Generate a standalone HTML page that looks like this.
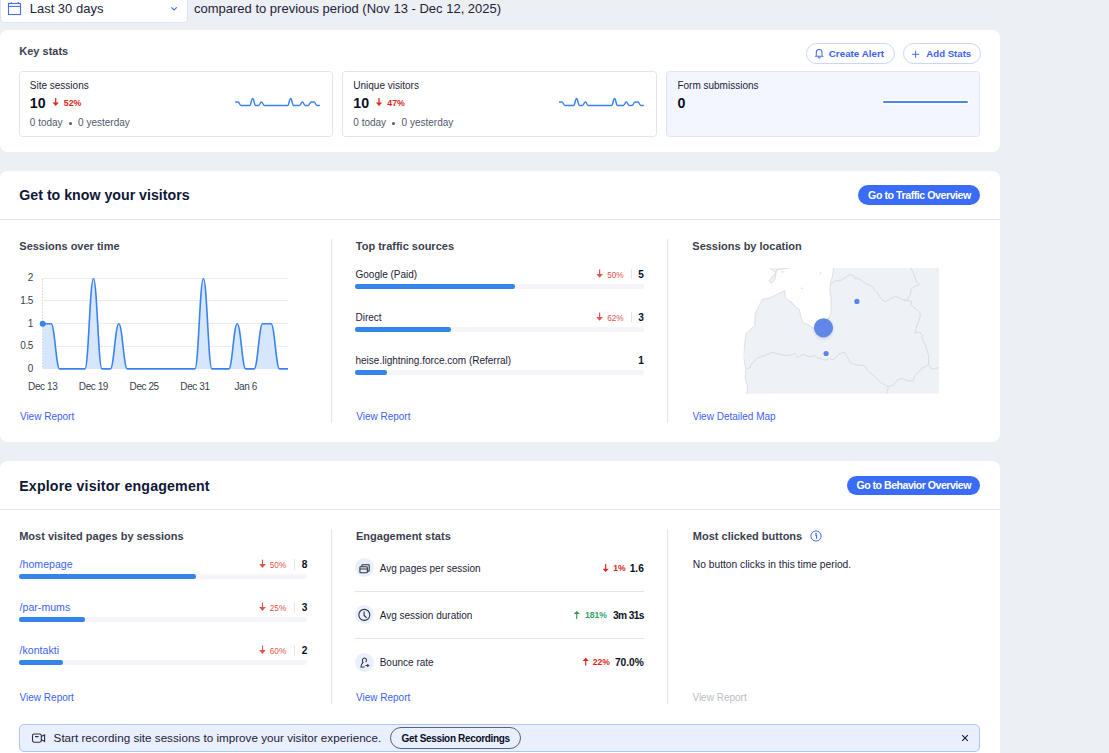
<!DOCTYPE html><html><head><meta charset="utf-8"><style>
html,body{margin:0;padding:0;}
body{width:1109px;height:753px;overflow:hidden;position:relative;background:#eceff4;font-family:"Liberation Sans",sans-serif;}
.t{position:absolute;white-space:nowrap;}
.r{position:absolute;box-sizing:border-box;}
svg{position:absolute;overflow:visible;}
</style></head><body>

<div class="r" style="left:0px;top:-10px;width:188px;height:33px;background:#fff;border:1px solid #d9e4fc;border-radius:4px;"></div>
<svg style="left:0;top:0" width="40" height="22"><g fill="none" stroke="#4a6cf2" stroke-width="1.1"><rect x="8.5" y="3.5" width="12" height="11"/><line x1="8.5" y1="6.4" x2="20.5" y2="6.4"/><line x1="11.2" y1="2" x2="11.2" y2="4"/><line x1="18.3" y1="2" x2="18.3" y2="4"/></g></svg>
<div class="t" style="left:29.70px;top:2.00px;font-size:13px;line-height:13px;color:#1d2338;">Last 30 days</div>
<svg style="left:0;top:0" width="1" height="1"><polyline points="171.3,7.4 174,10 176.8,7.4" fill="none" stroke="#4a6cf2" stroke-width="1.2"/></svg>
<div class="t" style="left:194.00px;top:2.00px;font-size:13px;line-height:13px;color:#1d2338;">compared to previous period (Nov 13 - Dec 12, 2025)</div>
<div class="r" style="left:0px;top:30px;width:1000px;height:122px;background:#fff;border-radius:8px;"></div>
<div class="t" style="left:19.30px;top:46.00px;font-size:11px;line-height:11px;color:#3b3f4f;font-weight:700;">Key stats</div>
<div class="r" style="left:806px;top:43px;width:89px;height:21px;background:#fff;border:1px solid #c9d6f7;border-radius:11px;"></div>
<svg style="left:0;top:0" width="1" height="1"><path d="M816.3,55.6 V52.2 C816.3,50.4 817.6,49.4 819.2,49.4 C820.8,49.4 822,50.4 822,52.2 V55.6 M815.3,56.2 H823 M818.2,57.4 C818.6,58.3 819.8,58.3 820.2,57.4" fill="none" stroke="#4a6cf2" stroke-width="1.05" stroke-linecap="round"/></svg>
<div class="t" style="left:828.80px;top:49.00px;font-size:9.8px;line-height:9.8px;color:#3d5ff5;font-weight:700;">Create Alert</div>
<div class="r" style="left:903px;top:43px;width:78px;height:21px;background:#fff;border:1px solid #c9d6f7;border-radius:11px;"></div>
<svg style="left:911px;top:49px" width="10" height="10"><path d="M4.6,1.8 V8.8 M1.1,5.3 H8.1" fill="none" stroke="#4a6cf2" stroke-width="1"/></svg>
<div class="t" style="left:926.30px;top:49.00px;font-size:9.65px;line-height:9.65px;color:#3d5ff5;font-weight:700;">Add Stats</div>
<div class="r" style="left:19px;top:71px;width:314px;height:65.5px;background:#fff;border:1px solid #e0e4eb;border-radius:3.5px;"></div>
<div class="t" style="left:29.80px;top:81.00px;font-size:10px;line-height:10px;color:#1d2338;">Site sessions</div>
<div class="t" style="left:29.80px;top:96.00px;font-size:14.2px;line-height:14.2px;color:#0a0f24;font-weight:700;">10</div>
<svg style="left:0;top:0" width="1" height="1"><path d="M52.55,102.60 L55.70,106.10 L58.85,102.60 Z" fill="#e0261a"/><path d="M55.70,98.00 V102.90" stroke="#e0261a" stroke-width="1.25"/></svg>
<div class="t" style="left:63.80px;top:99.00px;font-size:8.8px;line-height:8.8px;color:#e0261a;font-weight:700;">52%</div>
<div class="t" style="left:29.80px;top:118.00px;font-size:10px;line-height:10px;color:#525a6e;">0 today</div>
<div class="r" style="left:68.8px;top:121.5px;width:3px;height:3px;border-radius:50%;background:#555b68"></div>
<div class="t" style="left:78.10px;top:118.00px;font-size:10px;line-height:10px;color:#525a6e;">0 yesterday</div>
<svg style="left:0;top:0" width="1" height="1"><path d="M235.10,102.00 C236.43,102.00 236.69,102.00 238.02,102.00 C239.35,102.00 239.62,105.40 240.95,105.40 C242.28,105.40 242.54,105.40 243.87,105.40 C245.20,105.40 245.47,105.40 246.80,105.40 C248.13,105.40 248.39,105.40 249.72,105.40 C251.05,105.40 251.32,98.60 252.64,98.60 C253.97,98.60 254.24,105.40 255.57,105.40 C256.90,105.40 257.16,105.40 258.49,105.40 C259.82,105.40 260.09,102.00 261.42,102.00 C262.75,102.00 263.01,105.40 264.34,105.40 C265.67,105.40 265.94,105.40 267.27,105.40 C268.59,105.40 268.86,105.40 270.19,105.40 C271.52,105.40 271.78,105.40 273.11,105.40 C274.44,105.40 274.71,105.40 276.04,105.40 C277.37,105.40 277.63,105.40 278.96,105.40 C280.29,105.40 280.56,105.40 281.89,105.40 C283.22,105.40 283.48,105.40 284.81,105.40 C286.14,105.40 286.41,105.40 287.73,105.40 C289.06,105.40 289.33,98.60 290.66,98.60 C291.99,98.60 292.25,105.40 293.58,105.40 C294.91,105.40 295.18,105.40 296.51,105.40 C297.84,105.40 298.10,105.40 299.43,105.40 C300.76,105.40 301.03,102.00 302.36,102.00 C303.68,102.00 303.95,105.40 305.28,105.40 C306.61,105.40 306.87,105.40 308.20,105.40 C309.53,105.40 309.80,102.00 311.13,102.00 C312.46,102.00 312.72,102.00 314.05,102.00 C315.38,102.00 315.65,105.40 316.98,105.40 C318.31,105.40 318.57,105.40 319.90,105.40" fill="none" stroke="#3b82f0" stroke-width="1.5"/></svg>
<div class="r" style="left:342px;top:71px;width:315px;height:65.5px;background:#fff;border:1px solid #e0e4eb;border-radius:3.5px;"></div>
<div class="t" style="left:353.30px;top:81.00px;font-size:10px;line-height:10px;color:#1d2338;">Unique visitors</div>
<div class="t" style="left:353.30px;top:96.00px;font-size:14.2px;line-height:14.2px;color:#0a0f24;font-weight:700;">10</div>
<svg style="left:0;top:0" width="1" height="1"><path d="M375.85,102.60 L379.00,106.10 L382.15,102.60 Z" fill="#e0261a"/><path d="M379.00,98.00 V102.90" stroke="#e0261a" stroke-width="1.25"/></svg>
<div class="t" style="left:387.30px;top:99.00px;font-size:8.8px;line-height:8.8px;color:#e0261a;font-weight:700;">47%</div>
<div class="t" style="left:353.30px;top:118.00px;font-size:10px;line-height:10px;color:#525a6e;">0 today</div>
<div class="r" style="left:392.3px;top:121.5px;width:3px;height:3px;border-radius:50%;background:#555b68"></div>
<div class="t" style="left:401.60px;top:118.00px;font-size:10px;line-height:10px;color:#525a6e;">0 yesterday</div>
<svg style="left:0;top:0" width="1" height="1"><path d="M559.00,102.00 C560.33,102.00 560.59,102.00 561.92,102.00 C563.25,102.00 563.52,105.40 564.85,105.40 C566.18,105.40 566.44,105.40 567.77,105.40 C569.10,105.40 569.37,105.40 570.70,105.40 C572.03,105.40 572.29,105.40 573.62,105.40 C574.95,105.40 575.22,98.60 576.54,98.60 C577.87,98.60 578.14,105.40 579.47,105.40 C580.80,105.40 581.06,105.40 582.39,105.40 C583.72,105.40 583.99,102.00 585.32,102.00 C586.65,102.00 586.91,105.40 588.24,105.40 C589.57,105.40 589.84,105.40 591.17,105.40 C592.49,105.40 592.76,105.40 594.09,105.40 C595.42,105.40 595.68,105.40 597.01,105.40 C598.34,105.40 598.61,105.40 599.94,105.40 C601.27,105.40 601.53,105.40 602.86,105.40 C604.19,105.40 604.46,105.40 605.79,105.40 C607.12,105.40 607.38,105.40 608.71,105.40 C610.04,105.40 610.31,105.40 611.63,105.40 C612.96,105.40 613.23,98.60 614.56,98.60 C615.89,98.60 616.15,105.40 617.48,105.40 C618.81,105.40 619.08,105.40 620.41,105.40 C621.74,105.40 622.00,105.40 623.33,105.40 C624.66,105.40 624.93,102.00 626.26,102.00 C627.58,102.00 627.85,105.40 629.18,105.40 C630.51,105.40 630.77,105.40 632.10,105.40 C633.43,105.40 633.70,102.00 635.03,102.00 C636.36,102.00 636.62,102.00 637.95,102.00 C639.28,102.00 639.55,105.40 640.88,105.40 C642.21,105.40 642.47,105.40 643.80,105.40" fill="none" stroke="#3b82f0" stroke-width="1.5"/></svg>
<div class="r" style="left:666px;top:71px;width:314px;height:65.5px;background:#f3f6fe;border:1px solid #dfe5f1;border-radius:3.5px;"></div>
<div class="t" style="left:677.40px;top:81.00px;font-size:10px;line-height:10px;color:#1d2338;">Form submissions</div>
<div class="t" style="left:677.40px;top:96.00px;font-size:14.2px;line-height:14.2px;color:#0a0f24;font-weight:700;">0</div>
<div class="r" style="left:882.8px;top:101.1px;width:85.3px;height:1.8px;background:#4a88f0;box-shadow:0 0 0 1.6px #fff;border-radius:1px;"></div>
<div class="r" style="left:0px;top:171px;width:1000px;height:270.5px;background:#fff;border-radius:8px;"></div>
<div class="t" style="left:19.30px;top:188.00px;font-size:14.2px;line-height:14.2px;color:#0f1736;font-weight:700;">Get to know your visitors</div>
<div class="r" style="left:858px;top:185px;width:122px;height:20px;background:#3a6cf7;border-radius:10px;"></div>
<div class="t" style="left:868.10px;top:190.00px;font-size:10.6px;line-height:10.6px;color:#fff;font-weight:700;letter-spacing:-0.44px;">Go to Traffic Overview</div>
<div class="r" style="left:0px;top:219px;width:1000px;height:1px;background:#e1e4ea;"></div>
<div class="r" style="left:331px;top:239px;width:1px;height:184px;background:#e3e6ec;"></div>
<div class="r" style="left:667px;top:239px;width:1px;height:184px;background:#e3e6ec;"></div>
<div class="t" style="left:19.30px;top:241.00px;font-size:11px;line-height:11px;color:#3b3f4f;font-weight:700;">Sessions over time</div>
<svg style="left:0;top:0" width="1" height="1"><line x1="42.7" y1="278.50" x2="288.0" y2="278.50" stroke="#ebecef" stroke-width="1"/><line x1="42.7" y1="300.50" x2="288.0" y2="300.50" stroke="#ebecef" stroke-width="1"/><line x1="42.7" y1="323.50" x2="288.0" y2="323.50" stroke="#ebecef" stroke-width="1"/><line x1="42.7" y1="346.50" x2="288.0" y2="346.50" stroke="#ebecef" stroke-width="1"/><line x1="42.5" y1="278.50" x2="42.5" y2="368.90" stroke="#d3d5da" stroke-width="1" stroke-dasharray="1.5,1.5"/><path d="M42.70,323.70 C46.22,323.70 47.63,323.70 51.16,323.70 C54.68,323.70 56.09,368.90 59.62,368.90 C63.14,368.90 64.55,368.90 68.08,368.90 C71.60,368.90 73.01,368.90 76.53,368.90 C80.06,368.90 81.47,368.90 84.99,368.90 C88.52,368.90 89.93,278.50 93.45,278.50 C96.98,278.50 98.39,368.90 101.91,368.90 C105.43,368.90 106.84,368.90 110.37,368.90 C113.89,368.90 115.30,323.70 118.83,323.70 C122.35,323.70 123.76,368.90 127.29,368.90 C130.81,368.90 132.22,368.90 135.74,368.90 C139.27,368.90 140.68,368.90 144.20,368.90 C147.73,368.90 149.14,368.90 152.66,368.90 C156.19,368.90 157.60,368.90 161.12,368.90 C164.65,368.90 166.05,368.90 169.58,368.90 C173.10,368.90 174.51,368.90 178.04,368.90 C181.56,368.90 182.97,368.90 186.50,368.90 C190.02,368.90 191.43,368.90 194.96,368.90 C198.48,368.90 199.89,278.50 203.41,278.50 C206.94,278.50 208.35,368.90 211.87,368.90 C215.40,368.90 216.81,368.90 220.33,368.90 C223.86,368.90 225.27,368.90 228.79,368.90 C232.31,368.90 233.72,323.70 237.25,323.70 C240.77,323.70 242.18,368.90 245.71,368.90 C249.23,368.90 250.64,368.90 254.17,368.90 C257.69,368.90 259.10,323.70 262.62,323.70 C266.15,323.70 267.56,323.70 271.08,323.70 C274.61,323.70 276.02,368.90 279.54,368.90 C283.07,368.90 284.48,368.90 288.00,368.90 L288.00,368.90 L42.70,368.90 Z" fill="#d6e6fc" stroke="none"/><path d="M42.70,323.70 C46.22,323.70 47.63,323.70 51.16,323.70 C54.68,323.70 56.09,368.90 59.62,368.90 C63.14,368.90 64.55,368.90 68.08,368.90 C71.60,368.90 73.01,368.90 76.53,368.90 C80.06,368.90 81.47,368.90 84.99,368.90 C88.52,368.90 89.93,278.50 93.45,278.50 C96.98,278.50 98.39,368.90 101.91,368.90 C105.43,368.90 106.84,368.90 110.37,368.90 C113.89,368.90 115.30,323.70 118.83,323.70 C122.35,323.70 123.76,368.90 127.29,368.90 C130.81,368.90 132.22,368.90 135.74,368.90 C139.27,368.90 140.68,368.90 144.20,368.90 C147.73,368.90 149.14,368.90 152.66,368.90 C156.19,368.90 157.60,368.90 161.12,368.90 C164.65,368.90 166.05,368.90 169.58,368.90 C173.10,368.90 174.51,368.90 178.04,368.90 C181.56,368.90 182.97,368.90 186.50,368.90 C190.02,368.90 191.43,368.90 194.96,368.90 C198.48,368.90 199.89,278.50 203.41,278.50 C206.94,278.50 208.35,368.90 211.87,368.90 C215.40,368.90 216.81,368.90 220.33,368.90 C223.86,368.90 225.27,368.90 228.79,368.90 C232.31,368.90 233.72,323.70 237.25,323.70 C240.77,323.70 242.18,368.90 245.71,368.90 C249.23,368.90 250.64,368.90 254.17,368.90 C257.69,368.90 259.10,323.70 262.62,323.70 C266.15,323.70 267.56,323.70 271.08,323.70 C274.61,323.70 276.02,368.90 279.54,368.90 C283.07,368.90 284.48,368.90 288.00,368.90" fill="none" stroke="#3b82f0" stroke-width="1.6"/><circle cx="42.7" cy="323.70" r="3" fill="#3b82f0"/></svg>
<div class="t" style="right:1076.10px;top:273.00px;font-size:10px;line-height:10px;color:#3a3f4c;letter-spacing:-0.45px;">2</div>
<div class="t" style="right:1076.10px;top:296.00px;font-size:10px;line-height:10px;color:#3a3f4c;letter-spacing:-0.45px;">1.5</div>
<div class="t" style="right:1076.10px;top:319.00px;font-size:10px;line-height:10px;color:#3a3f4c;letter-spacing:-0.45px;">1</div>
<div class="t" style="right:1076.10px;top:341.00px;font-size:10px;line-height:10px;color:#3a3f4c;letter-spacing:-0.45px;">0.5</div>
<div class="t" style="right:1076.10px;top:364.00px;font-size:10px;line-height:10px;color:#3a3f4c;letter-spacing:-0.45px;">0</div>
<div class="t" style="left:-17.30px;width:120px;text-align:center;top:382.00px;font-size:10px;line-height:10px;color:#3a3f4c;letter-spacing:-0.42px;">Dec 13</div>
<div class="t" style="left:33.45px;width:120px;text-align:center;top:382.00px;font-size:10px;line-height:10px;color:#3a3f4c;letter-spacing:-0.42px;">Dec 19</div>
<div class="t" style="left:84.20px;width:120px;text-align:center;top:382.00px;font-size:10px;line-height:10px;color:#3a3f4c;letter-spacing:-0.42px;">Dec 25</div>
<div class="t" style="left:134.96px;width:120px;text-align:center;top:382.00px;font-size:10px;line-height:10px;color:#3a3f4c;letter-spacing:-0.42px;">Dec 31</div>
<div class="t" style="left:185.71px;width:120px;text-align:center;top:382.00px;font-size:10px;line-height:10px;color:#3a3f4c;letter-spacing:-0.42px;">Jan 6</div>
<div class="t" style="left:19.90px;top:412.00px;font-size:10px;line-height:10px;color:#3d5ff5;">View Report</div>
<div class="t" style="left:355.80px;top:241.00px;font-size:11px;line-height:11px;color:#3b3f4f;font-weight:700;">Top traffic sources</div>
<div class="t" style="left:355.50px;top:270.00px;font-size:10px;line-height:10px;color:#1d2338;">Google (Paid)</div>
<div class="r" style="left:355px;top:284.2px;width:288.8px;height:4.5px;background:#f4f5f8;border-radius:2.25px;"></div>
<div class="r" style="left:355px;top:284.2px;width:160.20000000000005px;height:4.5px;background:#3584ea;border-radius:2.25px;"></div>
<div class="t" style="right:465.20px;top:270.00px;font-size:10.1px;line-height:10.1px;color:#0a0f24;font-weight:700;">5</div>
<div class="r" style="left:631px;top:269.2px;width:1px;height:10.3px;background:#e2e5ea;"></div>
<div class="t" style="right:485.40px;top:272.00px;font-size:8.2px;line-height:8.2px;color:#e5524a;">50%</div>
<svg style="left:0;top:0" width="1" height="1"><path d="M596.35,274.00 L599.60,277.80 L602.85,274.00 Z" fill="#e5524a"/><path d="M599.60,269.50 V274.30" stroke="#e5524a" stroke-width="1.15"/></svg>
<div class="t" style="left:355.50px;top:313.00px;font-size:10px;line-height:10px;color:#1d2338;">Direct</div>
<div class="r" style="left:355px;top:327.2px;width:288.8px;height:4.5px;background:#f4f5f8;border-radius:2.25px;"></div>
<div class="r" style="left:355px;top:327.2px;width:96px;height:4.5px;background:#3584ea;border-radius:2.25px;"></div>
<div class="t" style="right:465.20px;top:313.00px;font-size:10.1px;line-height:10.1px;color:#0a0f24;font-weight:700;">3</div>
<div class="r" style="left:631px;top:312.2px;width:1px;height:10.3px;background:#e2e5ea;"></div>
<div class="t" style="right:485.40px;top:315.00px;font-size:8.2px;line-height:8.2px;color:#e5524a;">62%</div>
<svg style="left:0;top:0" width="1" height="1"><path d="M596.35,317.00 L599.60,320.80 L602.85,317.00 Z" fill="#e5524a"/><path d="M599.60,312.50 V317.30" stroke="#e5524a" stroke-width="1.15"/></svg>
<div class="t" style="left:355.50px;top:356.00px;font-size:10px;line-height:10px;color:#1d2338;">heise.lightning.force.com (Referral)</div>
<div class="r" style="left:355px;top:370.3px;width:288.8px;height:4.5px;background:#f4f5f8;border-radius:2.25px;"></div>
<div class="r" style="left:355px;top:370.3px;width:32px;height:4.5px;background:#3584ea;border-radius:2.25px;"></div>
<div class="t" style="right:465.20px;top:356.00px;font-size:10.1px;line-height:10.1px;color:#0a0f24;font-weight:700;">1</div>
<div class="t" style="left:356.20px;top:412.00px;font-size:10px;line-height:10px;color:#3d5ff5;">View Report</div>
<div class="t" style="left:692.30px;top:241.00px;font-size:11px;line-height:11px;color:#3b3f4f;font-weight:700;">Sessions by location</div>
<svg style="left:0;top:0" width="1" height="1">
<defs><clipPath id="mc"><rect x="743.6" y="268" width="195.4" height="125.8"/></clipPath>
<filter id="sh" x="-50%" y="-50%" width="200%" height="200%"><feDropShadow dx="0" dy="1.5" stdDeviation="1.6" flood-color="#000" flood-opacity="0.13"/></filter></defs>
<g clip-path="url(#mc)">
<rect x="743.6" y="268" width="195.4" height="125.8" fill="#eef1f6"/>
<path d="M741,266 L833.4,266 L833.4,268.1 L832.5,275.8 L830.4,283.3 L829.8,289.8 L830.9,297.3 L831.2,306.9 L830.9,314.4 L828.2,318.7 L822.5,322.5 L816.5,329 L813,328.1 L808.4,324.5 L803,322.7 L801.2,318.2 L799.4,309.6 L795.8,307.3 L792.2,302.8 L787.2,299.2 L785,296.5 L785,290.6 L769.6,297.9 L762.4,299.2 L755.2,313.7 L754.7,325.4 L748.8,331.3 L746.1,333.4 L744.3,346.1 L743.4,356.9 L745.7,368.6 L745.2,378.6 L747.5,385.8 L746.6,396 L741,396 Z" fill="#fff" stroke="#cfd2d8" stroke-width="0.65"/>
<path d="M768.7,267 L788.6,267 L788.6,268.1 L776.8,269.9 L775.9,273.9 L775,279.3 L771.4,283.4 L769.1,280.7 L774.1,274.8 L775.9,272.1 L772.3,270.3 Z" fill="#eef1f6" stroke="#cfd2d8" stroke-width="0.65"/>
<g fill="#eef1f6" stroke="#d5d8de" stroke-width="0.5"><ellipse cx="782.7" cy="271.8" rx="0.7" ry="1"/><path d="M819.6,274 L820.8,272 L821.2,272.6 L820.2,274.4 Z"/><path d="M823.5,269.5 L824.6,268.4"/><ellipse cx="801.8" cy="288.4" rx="0.8" ry="0.7"/></g>
<g fill="none" stroke="#cfd2d8" stroke-width="0.7" stroke-linejoin="round">
<path d="M830.4,284.4 L834.7,281.2 L841.1,280.1 L849.7,274.7 L854,275.8 L855,279 L857.2,278 L865.8,283.3 L872.2,286.5 L874.4,289.8 L877.6,293 L880.8,298.3 L885.1,301.6 L895.8,296.2 L902.3,299.4 L906.6,300.5 L910.8,294 L910.8,289.8 L914.1,286.5 L919.4,284.9 L916.2,281.2 L914.1,274.7 L910.8,268"/>
<path d="M906.6,300.5 L911.9,301.6 L910.8,304.8 L916.2,309.1 L920.5,313.4 L919.4,319.8 L917.3,324.1 L916.2,328 L915.1,332.8 L919.4,332.3 L922.6,335.5 L921.6,337.7 L925.9,346.2 L926.9,349.5 L928.5,355.9 L928.5,364.5 L931.2,368.8 L934.5,368.8 L940,367.2"/>
<path d="M928.5,364.5 L921.6,368.8 L917.3,373.1 L914.1,377.4 L913,381.1 L906.6,380.6 L902.3,378.4 L898,379.5 L893.7,384.9 L888.3,386.5 L887.2,392.4 L886.2,395"/>
<path d="M888.3,386.5 L880.8,382.7 L874.4,376.3 L867.9,370.9 L864.7,365.6 L857.2,365 L850.8,363.4 L844.3,352.1 L837.9,354.8 L833.6,359.7 L829.3,358.6 L825.6,360.1 L822.9,359.6 L816.5,357.3 L814.7,355.5 L809.3,356.9 L803.9,354.6 L801.2,355.1 L797.6,357.8 L794.9,353.3 L793.1,354.6 L786.8,355.5 L778.6,354.2 L773.2,352.4 L769.6,353.3 L765.1,355.1 L757.9,357.8 L751.1,364.1 L750.2,367.7 L746.6,368.6"/>
</g>
</g>
<circle cx="823.5" cy="327.8" r="9.6" fill="#5a84e9" fill-opacity="0.96" filter="url(#sh)"/>
<path d="M815.2,327.4 L829.2,318.3" stroke="#4a74d8" stroke-width="0.5" opacity="0.5" fill="none"/>
<circle cx="856.9" cy="301.4" r="2.6" fill="#5a84e9"/>
<circle cx="826.1" cy="353.5" r="2.6" fill="#5a84e9"/>
</svg>
<div class="t" style="left:692.40px;top:412.00px;font-size:10px;line-height:10px;color:#3d5ff5;">View Detailed Map</div>
<div class="r" style="left:0px;top:461px;width:1000px;height:320px;background:#fff;border-radius:8px;"></div>
<div class="t" style="left:19.20px;top:479.00px;font-size:14.2px;line-height:14.2px;color:#0f1736;font-weight:700;letter-spacing:0.17px;">Explore visitor engagement</div>
<div class="r" style="left:846.7px;top:475.5px;width:133.3px;height:19.5px;background:#3a6cf7;border-radius:10px;"></div>
<div class="t" style="left:856.40px;top:480.00px;font-size:10.6px;line-height:10.6px;color:#fff;font-weight:700;letter-spacing:-0.5px;">Go to Behavior Overview</div>
<div class="r" style="left:0px;top:509px;width:1000px;height:1px;background:#e1e4ea;"></div>
<div class="r" style="left:331px;top:529px;width:1px;height:175px;background:#e3e6ec;"></div>
<div class="r" style="left:667px;top:529px;width:1px;height:175px;background:#e3e6ec;"></div>
<div class="t" style="left:19.20px;top:531.00px;font-size:11px;line-height:11px;color:#3b3f4f;font-weight:700;">Most visited pages by sessions</div>
<div class="t" style="left:19.60px;top:559.00px;font-size:10.6px;line-height:10.6px;color:#3d5ff5;">/homepage</div>
<div class="r" style="left:19px;top:574.3px;width:288px;height:4.5px;background:#f4f5f8;border-radius:2.25px;"></div>
<div class="r" style="left:19px;top:574.3px;width:177.2px;height:4.5px;background:#3584ea;border-radius:2.25px;"></div>
<div class="t" style="right:801.70px;top:560.00px;font-size:10.1px;line-height:10.1px;color:#0a0f24;font-weight:700;">8</div>
<div class="r" style="left:294px;top:559.3px;width:1px;height:10.3px;background:#e2e5ea;"></div>
<div class="t" style="right:822.80px;top:562.00px;font-size:8.2px;line-height:8.2px;color:#e5524a;">50%</div>
<svg style="left:0;top:0" width="1" height="1"><path d="M259.25,564.10 L262.50,567.90 L265.75,564.10 Z" fill="#e5524a"/><path d="M262.50,559.60 V564.40" stroke="#e5524a" stroke-width="1.15"/></svg>
<div class="t" style="left:19.60px;top:602.00px;font-size:10.6px;line-height:10.6px;color:#3d5ff5;">/par-mums</div>
<div class="r" style="left:19px;top:617.3px;width:288px;height:4.5px;background:#f4f5f8;border-radius:2.25px;"></div>
<div class="r" style="left:19px;top:617.3px;width:66.4px;height:4.5px;background:#3584ea;border-radius:2.25px;"></div>
<div class="t" style="right:801.70px;top:603.00px;font-size:10.1px;line-height:10.1px;color:#0a0f24;font-weight:700;">3</div>
<div class="r" style="left:294px;top:602.3px;width:1px;height:10.3px;background:#e2e5ea;"></div>
<div class="t" style="right:822.80px;top:605.00px;font-size:8.2px;line-height:8.2px;color:#e5524a;">25%</div>
<svg style="left:0;top:0" width="1" height="1"><path d="M259.25,607.10 L262.50,610.90 L265.75,607.10 Z" fill="#e5524a"/><path d="M262.50,602.60 V607.40" stroke="#e5524a" stroke-width="1.15"/></svg>
<div class="t" style="left:19.60px;top:645.00px;font-size:10.6px;line-height:10.6px;color:#3d5ff5;">/kontakti</div>
<div class="r" style="left:19px;top:660.3px;width:288px;height:4.5px;background:#f4f5f8;border-radius:2.25px;"></div>
<div class="r" style="left:19px;top:660.3px;width:44.1px;height:4.5px;background:#3584ea;border-radius:2.25px;"></div>
<div class="t" style="right:801.70px;top:646.00px;font-size:10.1px;line-height:10.1px;color:#0a0f24;font-weight:700;">2</div>
<div class="r" style="left:294px;top:645.3px;width:1px;height:10.3px;background:#e2e5ea;"></div>
<div class="t" style="right:822.80px;top:648.00px;font-size:8.2px;line-height:8.2px;color:#e5524a;">60%</div>
<svg style="left:0;top:0" width="1" height="1"><path d="M259.25,650.10 L262.50,653.90 L265.75,650.10 Z" fill="#e5524a"/><path d="M262.50,645.60 V650.40" stroke="#e5524a" stroke-width="1.15"/></svg>
<div class="t" style="left:19.60px;top:693.00px;font-size:10px;line-height:10px;color:#3d5ff5;">View Report</div>
<div class="t" style="left:356.00px;top:531.00px;font-size:11px;line-height:11px;color:#3b3f4f;font-weight:700;">Engagement stats</div>
<div class="r" style="left:355.1px;top:558.0px;width:19px;height:19px;border-radius:50%;background:#e9f0fd"></div>
<svg style="left:364.3px;top:567.5px" width="1" height="1"><g fill="none" stroke="#2b3040" stroke-width="1.05"><rect x="-4.1" y="-1.3" width="7.4" height="6" rx="0.7"/><path d="M-4.1,0.9 H3.3 M-2.1,-1.3 V-2.9 C-2.1,-3.1 -2,-3.2 -1.8,-3.2 H4.9 C5.1,-3.2 5.2,-3.1 5.2,-2.9 V2.8 C5.2,3 5.1,3.1 4.9,3.1 H3.3"/></g></svg>
<div class="t" style="left:379.70px;top:564.00px;font-size:10px;line-height:10px;color:#1d2338;">Avg pages per session</div>
<div class="t" style="right:465.20px;top:564.00px;font-size:10.2px;line-height:10.2px;color:#0a0f24;font-weight:700;letter-spacing:0px;">1.6</div>
<div class="t" style="left:613.20px;top:564.00px;font-size:8.6px;line-height:8.6px;color:#e0261a;font-weight:700;">1%</div>
<svg style="left:0;top:0" width="1" height="1"><path d="M602.65,568.80 L605.70,572.00 L608.75,568.80 Z" fill="#e0261a"/><path d="M605.70,564.00 V569.10" stroke="#e0261a" stroke-width="1.15"/></svg>
<div class="r" style="left:355px;top:591px;width:289px;height:1px;background:#e1e5ee;"></div>
<div class="r" style="left:355.1px;top:605.4px;width:19px;height:19px;border-radius:50%;background:#e9f0fd"></div>
<svg style="left:364.3px;top:614.9px" width="1" height="1"><g fill="none" stroke="#2b3040" stroke-width="1.1"><circle cx="0.3" cy="-0.1" r="5.5"/><path d="M0.1,-3.4 V0.4 L2.6,2.8"/></g></svg>
<div class="t" style="left:379.70px;top:611.00px;font-size:10px;line-height:10px;color:#1d2338;">Avg session duration</div>
<div class="t" style="right:465.20px;top:611.00px;font-size:10.2px;line-height:10.2px;color:#0a0f24;font-weight:700;letter-spacing:-0.62px;">3m 31s</div>
<div class="t" style="left:585.00px;top:611.00px;font-size:8.6px;line-height:8.6px;color:#35a36b;font-weight:700;">181%</div>
<svg style="left:0;top:0" width="1" height="1"><path d="M573.65,614.10 L576.70,610.90 L579.75,614.10 Z" fill="#2f9e4c"/><path d="M576.70,613.80 V618.90" stroke="#2f9e4c" stroke-width="1.15"/></svg>
<div class="r" style="left:355px;top:638.2px;width:289px;height:1px;background:#e1e5ee;"></div>
<div class="r" style="left:355.1px;top:653.0px;width:19px;height:19px;border-radius:50%;background:#e9f0fd"></div>
<svg style="left:364.3px;top:662.5px" width="1" height="1"><g fill="none" stroke="#2b3040" stroke-width="1.05" stroke-linecap="round"><path d="M0.2,3.9 H-3 V3.4 C-3,2 -2,0.6 -1,-0.6 C-2.2,-2 -1.6,-5 0.5,-5 C2.4,-5 2.8,-2.9 2,-1.3"/><path d="M1.8,2.5 H3"/></g><path d="M3.2,0.7 L5.6,2.5 L3.2,4.3 Z" fill="#2b3040"/></svg>
<div class="t" style="left:379.70px;top:658.00px;font-size:10px;line-height:10px;color:#1d2338;">Bounce rate</div>
<div class="t" style="right:465.20px;top:658.00px;font-size:10.2px;line-height:10.2px;color:#0a0f24;font-weight:700;letter-spacing:0px;">70.0%</div>
<div class="t" style="left:592.80px;top:658.00px;font-size:8.6px;line-height:8.6px;color:#e0261a;font-weight:700;">22%</div>
<svg style="left:0;top:0" width="1" height="1"><path d="M582.65,660.90 L585.70,657.70 L588.75,660.90 Z" fill="#e0261a"/><path d="M585.70,660.60 V665.70" stroke="#e0261a" stroke-width="1.15"/></svg>
<div class="t" style="left:356.00px;top:693.00px;font-size:10px;line-height:10px;color:#3d5ff5;">View Report</div>
<div class="t" style="left:692.80px;top:531.00px;font-size:11px;line-height:11px;color:#3b3f4f;font-weight:700;">Most clicked buttons</div>
<svg style="left:816.3px;top:536.1px" width="1" height="1"><g fill="none" stroke="#3d6cf7" stroke-width="1"><circle r="5.1"/></g><path d="M-0.9,-0.9 H0.6 V2.8" fill="none" stroke="#3d6cf7" stroke-width="1.2"/><circle cy="-2.6" r="0.75" fill="#3d6cf7"/></svg>
<div class="t" style="left:692.80px;top:560.00px;font-size:10.25px;line-height:10.25px;color:#1d2338;">No button clicks in this time period.</div>
<div class="t" style="left:692.40px;top:693.00px;font-size:10px;line-height:10px;color:#b9bdc6;">View Report</div>
<div class="r" style="left:19px;top:724px;width:961px;height:28px;background:#e8effd;border:1px solid #abc6f8;border-radius:5px;"></div>
<svg style="left:0;top:0" width="1" height="1"><g fill="none" stroke="#2b3040" stroke-width="1.1"><rect x="32.5" y="734" width="8.8" height="8.2" rx="1.6"/><path d="M35.1,736.6 H38.6 M41.3,736.5 L44.6,734.9 V741.3 L41.3,739.7"/></g></svg>
<div class="t" style="left:53.60px;top:732.00px;font-size:11.68px;line-height:11.68px;color:#1d2338;">Start recording site sessions to improve your visitor experience.</div>
<div class="r" style="left:390.1px;top:727px;width:130.6px;height:22px;background:#fff0;border:1px solid #5d6170;border-radius:11px;"></div>
<div class="t" style="left:401.50px;top:734.00px;font-size:10px;line-height:10px;color:#0a0f24;font-weight:700;letter-spacing:-0.33px;">Get Session Recordings</div>
<svg style="left:965px;top:738px" width="1" height="1"><path d="M-2.8,-2.8 L2.8,2.8 M2.8,-2.8 L-2.8,2.8" stroke="#1d2338" stroke-width="1.15"/></svg>
</body></html>
